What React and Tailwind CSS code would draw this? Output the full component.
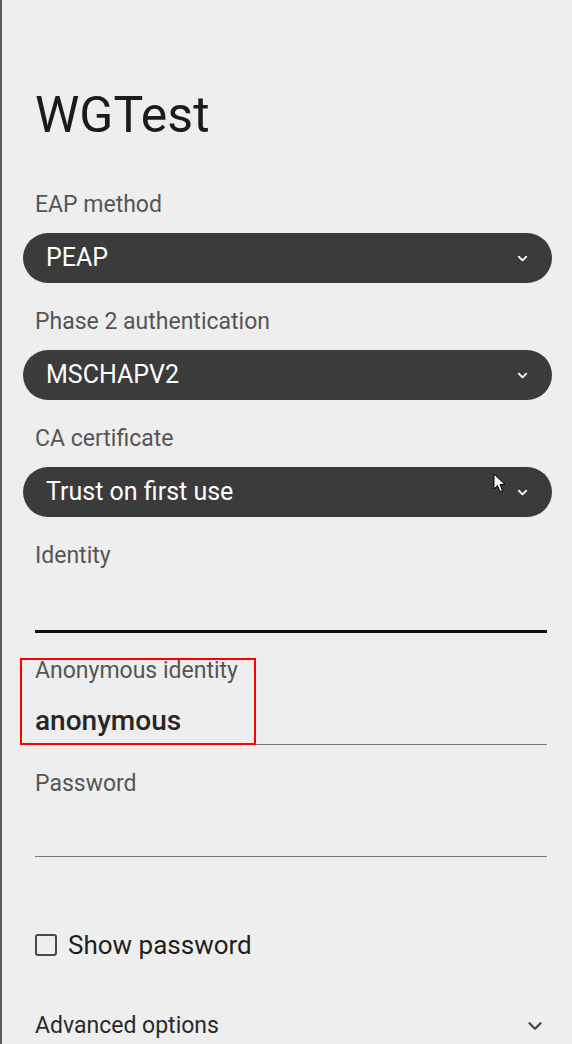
import { ChevronDown } from "lucide-react";

const SELECTS = [
  { label: "EAP method", value: "PEAP" },
  { label: "Phase 2 authentication", value: "MSCHAPV2" },
  { label: "CA certificate", value: "Trust on first use", cursor: true },
];

function Cursor() {
  return (
    <svg
      className="absolute left-[470px] top-[6px]"
      width="13"
      height="20"
      viewBox="0 0 13 20"
    >
      <path d="M1 1 L1 16 L4.5 12.5 L7 18.5 L9.5 17.5 L7 11.5 L12 11.5 Z" fill="#fff" stroke="#000" strokeWidth="1" strokeLinejoin="round" />
    </svg>
  );
}

function SelectField({ label, value, cursor }) {
  return (
    <div className="mb-[25px]">
      <div className="pl-[35px] h-[28px] leading-[28px] text-[23px] text-[#555555]">{label}</div>
      <div className="relative mt-[14px] ml-[23px] mr-[20px] h-[50px] rounded-full bg-[#3b3b3b] flex items-center pl-[23px] pr-[22px]">
        <span className="flex-1 text-[25px] text-white">{value}</span>
        <ChevronDown size={15} strokeWidth={3} className="text-white" />
        {cursor && <Cursor />}
      </div>
    </div>
  );
}

function TextField({ label, value, focused, areaH, className }) {
  return (
    <div className={"px-[35px] pr-[25px] " + (className || "")}>
      <div className="h-[28px] leading-[28px] text-[23px] text-[#555555]">{label}</div>
      <div className="flex items-center" style={{ height: areaH }}>
        {value && <span className="mt-[13px] text-[28px] font-medium text-[#262626]">{value}</span>}
      </div>
      {focused ? (
        <div className="h-[3px] bg-[#111111]" />
      ) : (
        <div className="h-px bg-[#7a7a7a]" />
      )}
    </div>
  );
}

export default function App() {
  return (
    <div className="relative w-[572px] h-[1044px] overflow-hidden bg-[#eeeeee] border-l-2 border-[#5a5a5a] font-['Roboto',_'Noto_Sans',_sans-serif]">
      <div className="pt-[85px] pl-[33px] h-[145px] text-[50px] leading-[60px] text-[#1b1b1b]">WGTest</div>
      <div className="mt-[46px] -ml-[2px]">
        {SELECTS.map((s) => (
          <SelectField key={s.label} {...s} />
        ))}
        <TextField label="Identity" focused areaH={60} />
        <TextField label="Anonymous identity" value="anonymous" areaH={59} className="mt-[24px]" />
        <TextField label="Password" areaH={58} className="mt-[25px]" />

        <div className="mt-[77px] pl-[35px] flex items-center h-[22px]">
          <div className="w-[22px] h-[22px] rounded-[3px] border-[2.5px] border-[#4a4a4a]" />
          <span className="ml-[11px] text-[26px] text-[#1f1f1f]">Show password</span>
        </div>

        <div className="mt-[59px] pl-[35px] pr-[26px] flex items-center h-[22px]">
          <span className="flex-1 text-[23px] text-[#2a2a2a]">Advanced options</span>
          <ChevronDown size={22} strokeWidth={2.5} className="text-[#444444]" />
        </div>
      </div>
      <div className="absolute left-[18px] top-[658px] w-[236px] h-[87px] border-2 border-[#ff0000]" />
    </div>
  );
}
